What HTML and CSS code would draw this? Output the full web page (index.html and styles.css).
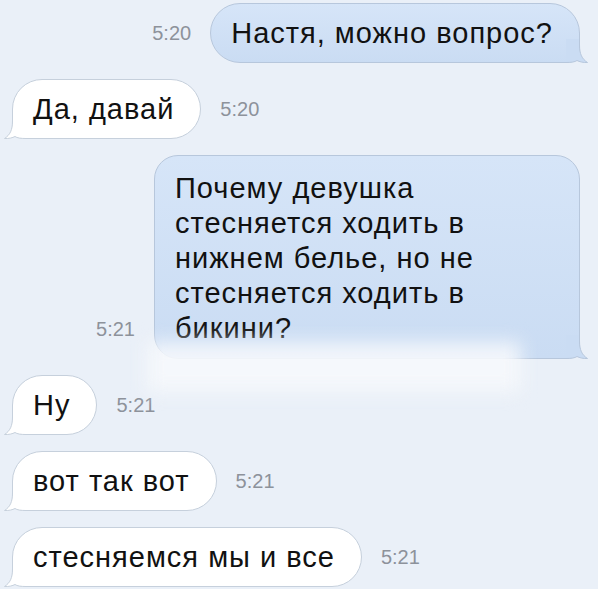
FILE: index.html
```html
<!DOCTYPE html>
<html lang="ru">
<head>
    <meta name="viewport" content="width=device-width, initial-scale=1">
    <title>Сообщения</title>
    <link rel="stylesheet" href="styles.css">
</head>

<body>

    <div class="chat">

        <div class="row out">
            <span class="time">5:20</span>
            <div class="bubble">
                Настя, можно вопрос?
                <svg class="tail" width="22" height="24" viewBox="0 0 22 24"><path class="tail-fill" d="M0 0 H13.5 V6 C13.5 15 16 20 21.5 23.5 C17 23.7 13.5 22.8 11 21.5 C9 23 5 23.5 0 23.5 Z"/><path class="tail-line" d="M13.5 0 V6 C13.5 15 16 20 21.5 23.5 C17 23.7 13.5 22.8 11 21.5 C9 23 5 23.5 0 23.5"/></svg>
            </div>
        </div>

        <div class="row in">
            <div class="bubble">
                Да, давай
                <svg class="tail" width="22" height="24" viewBox="0 0 22 24"><path class="tail-fill" d="M0 0 H13.5 V6 C13.5 15 16 20 21.5 23.5 C17 23.7 13.5 22.8 11 21.5 C9 23 5 23.5 0 23.5 Z"/><path class="tail-line" d="M13.5 0 V6 C13.5 15 16 20 21.5 23.5 C17 23.7 13.5 22.8 11 21.5 C9 23 5 23.5 0 23.5"/></svg>
            </div>
            <span class="time">5:20</span>
        </div>

        <div class="row out">
            <span class="time">5:21</span>
            <div class="bubble long">
                Почему девушка<br>
                стесняется ходить в<br>
                нижнем белье, но не<br>
                стесняется ходить в<br>
                бикини?
                <svg class="tail" width="22" height="24" viewBox="0 0 22 24"><path class="tail-fill" d="M0 0 H13.5 V6 C13.5 15 16 20 21.5 23.5 C17 23.7 13.5 22.8 11 21.5 C9 23 5 23.5 0 23.5 Z"/><path class="tail-line" d="M13.5 0 V6 C13.5 15 16 20 21.5 23.5 C17 23.7 13.5 22.8 11 21.5 C9 23 5 23.5 0 23.5"/></svg>
                <div class="smudge"></div>
            </div>
        </div>

        <div class="row in">
            <div class="bubble">
                Ну
                <svg class="tail" width="22" height="24" viewBox="0 0 22 24"><path class="tail-fill" d="M0 0 H13.5 V6 C13.5 15 16 20 21.5 23.5 C17 23.7 13.5 22.8 11 21.5 C9 23 5 23.5 0 23.5 Z"/><path class="tail-line" d="M13.5 0 V6 C13.5 15 16 20 21.5 23.5 C17 23.7 13.5 22.8 11 21.5 C9 23 5 23.5 0 23.5"/></svg>
            </div>
            <span class="time">5:21</span>
        </div>

        <div class="row in">
            <div class="bubble">
                вот так вот
                <svg class="tail" width="22" height="24" viewBox="0 0 22 24"><path class="tail-fill" d="M0 0 H13.5 V6 C13.5 15 16 20 21.5 23.5 C17 23.7 13.5 22.8 11 21.5 C9 23 5 23.5 0 23.5 Z"/><path class="tail-line" d="M13.5 0 V6 C13.5 15 16 20 21.5 23.5 C17 23.7 13.5 22.8 11 21.5 C9 23 5 23.5 0 23.5"/></svg>
            </div>
            <span class="time">5:21</span>
        </div>

        <div class="row in">
            <div class="bubble">
                стесняемся мы и все
                <svg class="tail" width="22" height="24" viewBox="0 0 22 24"><path class="tail-fill" d="M0 0 H13.5 V6 C13.5 15 16 20 21.5 23.5 C17 23.7 13.5 22.8 11 21.5 C9 23 5 23.5 0 23.5 Z"/><path class="tail-line" d="M13.5 0 V6 C13.5 15 16 20 21.5 23.5 C17 23.7 13.5 22.8 11 21.5 C9 23 5 23.5 0 23.5"/></svg>
            </div>
            <span class="time">5:21</span>
        </div>

    </div>

</body>
</html>
```

FILE: styles.css
```css
body {
    margin: 0;
    background-color: #eaf0f8;
    font-family: 'Liberation Sans', Arial, sans-serif;
    color: #111;
    overflow: hidden;
}

.chat {
    display: flex;
    flex-direction: column;
    gap: 16px;
    padding: 3px 18px 0 12px;
}

.row {
    display: flex;
    align-items: flex-end;
    gap: 19px;
}

.row.out {
    justify-content: flex-end;
}

.time {
    font-size: 20px;
    color: #8d929b;
    padding-bottom: 18px;
}

.bubble {
    position: relative;
    font-size: 29px;
    letter-spacing: 1px;
    line-height: 35px;
    padding: 12px 26px 11px 20px;
    border: 1px solid #c6d0dc;
    border-radius: 30px;
    background-color: #fff;
}

.out .bubble {
    background: linear-gradient(#d6e5f8, #cadcf3);
    border-color: #b7c7dc;
    border-bottom-right-radius: 12px;
}

.in .bubble {
    border-bottom-left-radius: 12px;
}

.bubble.long {
    width: 378px;
    padding: 15px 26px 12px 20px;
    border-radius: 24px;
    border-bottom-right-radius: 12px;
}

.tail {
    position: absolute;
    bottom: -1px;
    right: -9px;
}

.in .tail {
    right: auto;
    left: -9px;
    transform: scaleX(-1);
}

.tail-fill {
    fill: #fff;
}

.out .tail-fill {
    fill: #cadcf3;
}

.tail-line {
    fill: none;
    stroke: #c6d0dc;
    stroke-width: 1;
}

.out .tail-line {
    stroke: #b7c7dc;
}

/* white smear over the bottom of the long message */
.smudge {
    position: absolute;
    left: -8px;
    right: 58px;
    bottom: -34px;
    height: 50px;
    background-color: rgba(246, 248, 252, 0.9);
    filter: blur(9px);
}
```
